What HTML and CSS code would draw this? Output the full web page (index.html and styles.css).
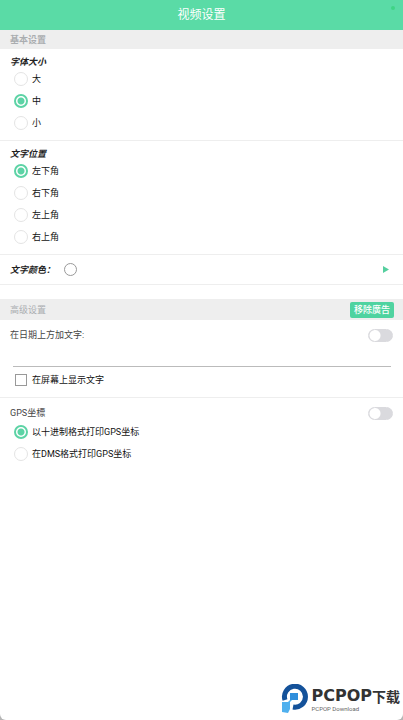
FILE: index.html
```
<!DOCTYPE html>
<html lang="zh">
<head>
  <meta charset="UTF-8">
  <meta name="viewport" content="width=device-width, initial-scale=1">
  <title>视频设置</title>
  <link rel="stylesheet" href="styles.css">
</head>
<body>
  <div class="screen">
    <header class="topbar">
      <h1>视频设置</h1>
      <span class="topbar-dot"></span>
    </header>

    <main>
      <!-- Basic settings -->
      <h2 class="section-title basic">基本设置</h2>

      <fieldset class="group">
        <legend>字体大小</legend>
        <label class="option"><input type="radio" name="font_size" value="large"> 大</label>
        <label class="option"><input type="radio" name="font_size" value="medium" checked> 中</label>
        <label class="option"><input type="radio" name="font_size" value="small"> 小</label>
      </fieldset>

      <fieldset class="group">
        <legend>文字位置</legend>
        <label class="option"><input type="radio" name="position" value="bottom-left" checked> 左下角</label>
        <label class="option"><input type="radio" name="position" value="bottom-right"> 右下角</label>
        <label class="option"><input type="radio" name="position" value="top-left"> 左上角</label>
        <label class="option"><input type="radio" name="position" value="top-right"> 右上角</label>
      </fieldset>

      <button type="button" class="color-row">
        <span class="color-label">文字颜色：</span>
        <span class="swatch"></span>
        <svg class="arrow" viewBox="0 0 6 7"><path d="M0 0L6 3.5L0 7Z"/></svg>
      </button>

      <!-- Advanced settings -->
      <div class="section-title advanced">
        <h2>高级设置</h2>
        <button type="button" class="remove-ads">移除廣告</button>
      </div>

      <section class="group">
        <div class="switch-row">
          <label for="custom-text-on">在日期上方加文字:</label>
          <input type="checkbox" class="switch" id="custom-text-on">
        </div>
        <input type="text" class="custom-text" aria-label="在日期上方加文字">
        <label class="option"><input type="checkbox" class="check"> 在屏幕上显示文字</label>
      </section>

      <section class="group last">
        <div class="switch-row">
          <label for="gps-on">GPS坐標</label>
          <input type="checkbox" class="switch" id="gps-on">
        </div>
        <label class="option"><input type="radio" name="gps_format" value="decimal" checked> 以十进制格式打印GPS坐标</label>
        <label class="option"><input type="radio" name="gps_format" value="dms"> 在DMS格式打印GPS坐标</label>
      </section>
    </main>

    <footer class="brand">
      <svg class="brand-mark" viewBox="0 0 28 30">
        <path d="M4 16A10.500 10.500 0 1 1 12 23" fill="none" stroke="#14529a" stroke-width="5"/>
        <path d="M9 9H17V16H9Z" fill="#2f8fdc"/>
        <path d="M9 16H11L9 18V25L7 29L1 28V18H7Z" fill="#4fb0ee"/>
      </svg>
      <div>
        <div class="brand-name">PCPOP<span>下载</span></div>
        <div class="brand-sub">PCPOP Download</div>
      </div>
    </footer>
  </div>
</body>
</html>
```

FILE: styles.css
```
* {
  box-sizing: border-box;
}
body {
  margin: 0;
  font-family: Roboto, "Noto Sans CJK SC", sans-serif;
  font-size: 9px;
  line-height: 12px;
  background: #b5b5b5;
  color: #222;
}
h1, h2 {
  margin: 0;
  font-size: inherit;
}
button, input {
  font: inherit;
  color: inherit;
}

/* Screen with rounded bottom corners */
.screen {
  display: flex;
  flex-direction: column;
  min-height: 100vh;
  background: #fff;
  border-radius: 0 0 6px 6px;
}
main {
  flex: 1;
}

.topbar {
  position: relative;
  display: flex;
  align-items: center;
  justify-content: center;
  height: 30px;
  background: #5adba6;
  color: #fff;
}
.topbar h1 {
  font-size: 12px;
  font-weight: normal;
}
.topbar-dot {
  position: absolute;
  top: 6px;
  right: 8px;
  width: 4px;
  height: 4px;
  border-radius: 50%;
  background: #3fd486;
}

.section-title {
  padding: 4px 10px 3px;
  background: #eee;
  color: #aaadb0;
}
.basic {
  font-weight: bold;
}
.advanced {
  display: flex;
  align-items: center;
  justify-content: space-between;
  margin-top: 14px;
  padding: 3px 9px 2px 10px;
}
.advanced h2 {
  font-weight: normal;
}
.remove-ads {
  padding: 2px 4px;
  border: none;
  border-radius: 2px;
  background: #4fd3a0;
  color: #fff;
  font-weight: 500;
  cursor: pointer;
}

/* Setting groups */
.group {
  margin: 0;
  padding: 7px 10px 6px;
  border: none;
  border-bottom: 1px solid #eee;
}
.group.last {
  border-bottom: none;
}
legend {
  float: left;
  width: 100%;
  padding: 0;
  font-weight: bold;
  font-style: italic;
}
.option {
  display: flex;
  align-items: center;
  clear: both;
  gap: 4px;
  height: 22px;
  padding-left: 4px;
  color: #111;
}
.option input {
  appearance: none;
  flex: none;
  width: 14px;
  height: 14px;
  margin: 0;
  border: 1px solid #e4e4e4;
  border-radius: 50%;
  background: #fff;
}
.option input:checked {
  border: 2px solid #5cd3a5;
  background: radial-gradient(circle, #5cd3a5 3px, #fff 4px);
}
.option .check {
  width: 12px;
  height: 12px;
  margin: 0 1px;
  border-color: #999;
  border-radius: 0;
}

.color-row {
  display: flex;
  align-items: center;
  width: 100%;
  height: 30px;
  padding: 0 14px 0 10px;
  border: none;
  border-bottom: 1px solid #eee;
  background: none;
  cursor: pointer;
}
.color-label {
  font-weight: bold;
  font-style: italic;
}
.swatch {
  width: 13px;
  height: 13px;
  margin-left: 9px;
  border: 1px solid #999;
  border-radius: 50%;
}
.arrow {
  width: 6px;
  height: 7px;
  margin-left: auto;
  fill: #55cf9f;
}

.switch-row {
  display: flex;
  align-items: center;
  justify-content: space-between;
  height: 16px;
  color: #444;
}
.switch {
  appearance: none;
  width: 25px;
  height: 13px;
  margin: 0;
  border: 1px solid #dadade;
  border-radius: 7px;
  background: radial-gradient(circle at 6px 50%, #fff 5px, #dadade 6px);
}
.switch:checked {
  background: radial-gradient(circle at 17px 50%, #fff 5px, #5adba6 6px);
}
.custom-text {
  display: block;
  width: calc(100% - 5px);
  height: 24px;
  margin: 0 2px 2px 3px;
  padding: 0;
  border: none;
  border-bottom: 1px solid #bbb;
  outline: none;
  background: none;
}

/* Brand in the bottom corner */
.brand {
  display: flex;
  align-items: center;
  justify-content: flex-end;
  gap: 2px;
  padding: 0 3px 6px 0;
}
.brand-mark {
  width: 28px;
  height: 30px;
}
.brand-name {
  display: flex;
  align-items: center;
  color: #333;
  font-family: "DejaVu Sans", sans-serif;
  font-size: 16px;
  font-weight: bold;
  line-height: 20px;
}
.brand-name span {
  font-family: "Noto Sans CJK SC", sans-serif;
  font-size: 14px;
}
.brand-sub {
  color: #666;
  font-size: 6px;
  line-height: 6px;
}
```
